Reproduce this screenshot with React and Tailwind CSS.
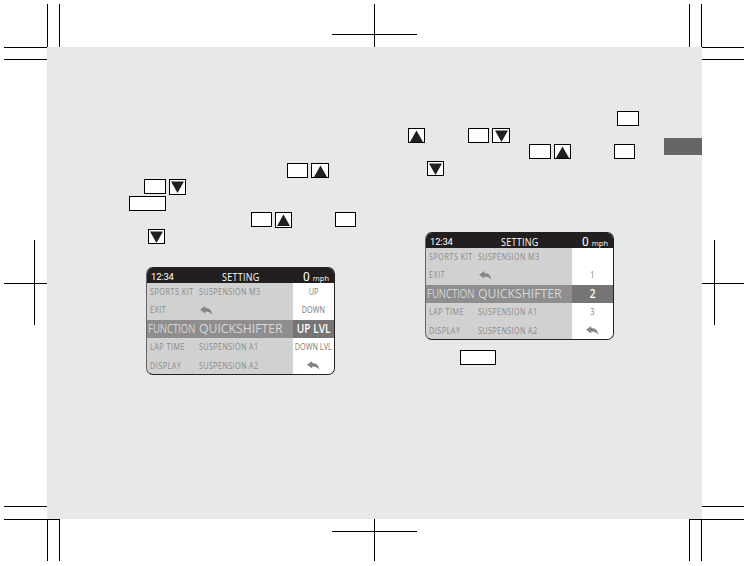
import React from 'react';

function Line({ x = 0, y = 0, w = 1, h = 1 }) {
  return <rect x={x} y={y} width={w} height={h} fill="#000" />;
}

function TopMarks() {
  return (
    <svg className="block h-[47px] w-[748px]" viewBox="0 0 748 47" shapeRendering="crispEdges">
      <Line x={47} y={4} h={43} />
      <Line x={59} y={4} h={43} />
      <Line x={374} y={4} h={43} />
      <Line x={332} y={34} w={85} />
      <Line x={689} y={4} h={43} />
      <Line x={701} y={4} h={43} />
    </svg>
  );
}

function BottomMarks() {
  return (
    <svg className="block h-[47px] w-[748px]" viewBox="0 0 748 47" shapeRendering="crispEdges">
      <Line x={4} w={56} />
      <Line x={689} w={55} />
      <Line x={47} h={42} />
      <Line x={59} h={42} />
      <Line x={374} h={42} />
      <Line x={332} y={12} w={85} />
      <Line x={689} h={42} />
      <Line x={701} h={42} />
    </svg>
  );
}

function SideMarks({ start, cross }) {
  return (
    <svg className="block h-[472px] w-full" shapeRendering="crispEdges">
      <Line x={start} y={0} w={start ? 43 : 42} />
      <Line x={start} y={12} w={start ? 43 : 42} />
      <Line x={start} y={236} w={start ? 43 : 42} />
      <Line x={start} y={459} w={start ? 43 : 42} />
      <Line x={cross} y={193} h={85} />
    </svg>
  );
}

function Key({ className = '' }) {
  return <span className={'block h-[15px] shrink-0 border border-black bg-white ' + className} />;
}

function ArrowKey({ down, className = 'h-[15px] w-[17px]' }) {
  return (
    <span className={'flex shrink-0 items-center justify-center border border-black bg-white ' + className}>
      <svg className="block h-[12px] w-[13px] shrink-0" viewBox="0 0 13 12">
        <path d={down ? 'M0 0.5H13L6.5 12Z' : 'M0 12H13L6.5 0.5Z'} fill="#231f20" />
      </svg>
    </span>
  );
}

function BackArrow() {
  return (
    <svg className="block h-[9px] w-[13px]" viewBox="0 0 13 9">
      <path d="M0 3.7L5.2 0V2.1C9.6 2.2 11.9 4.6 12.2 8.8C10.6 6.4 8.6 5.6 5.2 5.6V7.6Z" fill="#858585" />
    </svg>
  );
}

const rows = [
  ['SPORTS KIT', 'SUSPENSION M3'],
  ['EXIT', null],
  ['FUNCTION', 'QUICKSHIFTER'],
  ['LAP TIME', 'SUSPENSION A1'],
  ['DISPLAY', 'SUSPENSION A2'],
];

function Display({ values }) {
  return (
    <div className="flex h-[108px] w-[189px] flex-col overflow-hidden rounded-[7px] border border-[#231f20] border-l-[#666] bg-[#d1d1d1] font-['Open_Sans','Noto_Sans',sans-serif]">
      <div className="flex h-[15px] shrink-0 items-center bg-[#231f20] pt-[2px] leading-none text-white">
        <span className="w-[75px] pl-[4px] font-['Roboto',sans-serif] text-[9.5px] tracking-[-0.2px]">12:34</span>
        <span className="w-[78px] origin-left scale-x-[0.9] text-[10px] font-medium tracking-[0.3px]">SETTING</span>
        <span className="flex items-baseline gap-[3px] pl-[3px] whitespace-nowrap">
          <span className="font-['Roboto',sans-serif] text-[12px]">0</span>
          <span className="text-[7.5px] tracking-[0.1px]">mph</span>
        </span>
      </div>
      {rows.map(([label, name], i) => {
        const active = i === 2;
        return (
          <div key={label} className="flex h-[18.4px] shrink-0 items-stretch leading-none whitespace-nowrap">
            <div className={'flex w-[146px] shrink-0 items-center ' + (active ? 'bg-[#8f8d8e] text-[#d8d8d8]' : 'text-[#8a8a8a]')}>
              <span className={'w-[52px] shrink-0 ' + (active ? 'pl-[1px]' : 'pl-[3px]')}>
                <span
                  className={
                    'block origin-left ' +
                    (active
                      ? 'scale-x-[0.73] text-[13px]'
                      : 'scale-x-[0.86] text-[8.4px] font-medium tracking-[0.6px]')
                  }
                >
                  {label}
                </span>
              </span>
              {name ? (
                <span
                  className={
                    'origin-left ' +
                    (active ? 'scale-x-[0.94] text-[13px]' : 'scale-x-[0.86] text-[8.4px] font-medium tracking-[0.45px]')
                  }
                >
                  {name}
                </span>
              ) : (
                <span className="pl-px">
                  <BackArrow />
                </span>
              )}
            </div>
            <div
              className={
                'flex w-[41px] shrink-0 items-center justify-center ' +
                (active
                  ? 'bg-[#777475] text-[13px] font-semibold text-white'
                  : 'bg-white text-[8.4px] font-medium text-[#7c7c7c]')
              }
            >
              {values[i] === 'back' ? (
                <BackArrow />
              ) : (
                <span className={active ? 'scale-x-[0.78]' : 'scale-x-[0.87]'}>{values[i]}</span>
              )}
            </div>
          </div>
        );
      })}
    </div>
  );
}

function LeftColumn() {
  return (
    <div className="flex w-[340px] flex-col items-start pt-[116px]">
      <div className="ml-[240px] flex gap-[3px]">
        <Key className="w-[21px]" />
        <ArrowKey className="h-[15px] w-[18px]" />
      </div>
      <div className="mt-[1px] ml-[97px] flex gap-[3px]">
        <Key className="w-[22px]" />
        <ArrowKey down className="h-[16px] w-[17px]" />
      </div>
      <Key className="mt-[1px] ml-[82px] w-[37px]" />
      <div className="mt-[1px] ml-[204px] flex">
        <Key className="w-[21px]" />
        <ArrowKey className="ml-[3px] h-[16px] w-[17px]" />
        <Key className="ml-[43px] w-[21px]" />
      </div>
      <div className="mt-[1px] ml-[101px]">
        <ArrowKey down />
      </div>
      <div className="mt-[23px] ml-[99px]">
        <Display values={['UP', 'DOWN', 'UP LVL', 'DOWN LVL', 'back']} />
      </div>
    </div>
  );
}

function RightColumn() {
  return (
    <div className="flex w-[277px] flex-col items-start pt-[64px]">
      <Key className="ml-[230px] w-[22px]" />
      <div className="mt-[2px] ml-[21px] flex">
        <ArrowKey />
        <Key className="ml-[43px] w-[21px]" />
        <ArrowKey down className="ml-[3px] h-[15px] w-[18px]" />
      </div>
      <div className="mt-[1px] ml-[142px] flex">
        <Key className="w-[22px]" />
        <ArrowKey className="ml-[3px] h-[15px] w-[17px]" />
        <Key className="ml-[43px] w-[21px]" />
      </div>
      <div className="mt-[2px] ml-[40px]">
        <ArrowKey down />
      </div>
      <div className="mt-[56px] ml-[38px]">
        <Display values={['', '1', '2', '3', 'back']} />
      </div>
      <Key className="mt-[10px] ml-[73px] w-[36px]" />
    </div>
  );
}

export default function App() {
  return (
    <div className="h-[566px] w-[748px] overflow-hidden bg-white">
      <TopMarks />
      <div className="grid h-[472px] grid-cols-[47px_655px_46px]">
        <SideMarks start={4} cross={34} />
        <main className="flex bg-[#e8e8e8]">
          <LeftColumn />
          <RightColumn />
          <div className="mt-[91px] h-[17px] w-[38px] bg-[#666]" />
        </main>
        <SideMarks start={0} cross={12} />
      </div>
      <BottomMarks />
    </div>
  );
}
